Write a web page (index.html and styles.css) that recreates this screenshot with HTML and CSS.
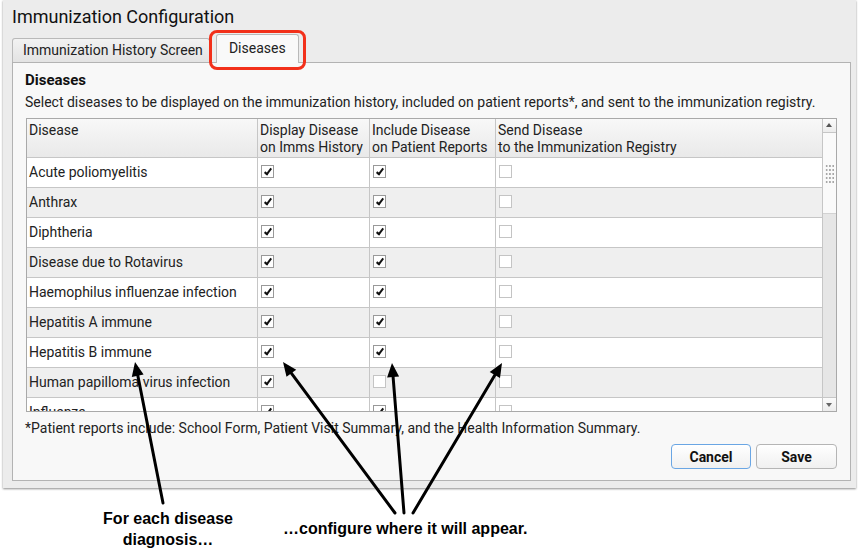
FILE: index.html
```html
<!DOCTYPE html>
<html lang="en">
<head>
  <meta charset="UTF-8">
  <title>Immunization Configuration</title>
  <link rel="stylesheet" href="styles.css">
</head>
<body>
  <!-- Dialog window -->
  <div class="window">
    <div class="title">Immunization Configuration</div>
    <div class="tabs">
      <div class="tab">Immunization History Screen</div>
      <div class="tab active">Diseases<span class="highlight"></span></div>
    </div>
    <div class="panel">
      <div class="heading">Diseases</div>
      <div class="desc">Select diseases to be displayed on the immunization history, included on patient reports*, and sent to the immunization registry.</div>

      <div class="grid">
        <div class="grid-main">
          <div class="grid-head">
            <div class="cell">Disease</div>
            <div class="cell">Display Disease<br>on Imms History</div>
            <div class="cell">Include Disease<br>on Patient Reports</div>
            <div class="cell">Send Disease<br>to the Immunization Registry</div>
          </div>
          <div class="grid-row">
            <div class="cell">Acute poliomyelitis</div>
            <div class="cell"><span class="cb on"></span></div>
            <div class="cell"><span class="cb on"></span></div>
            <div class="cell"><span class="cb"></span></div>
          </div>
          <div class="grid-row">
            <div class="cell">Anthrax</div>
            <div class="cell"><span class="cb on"></span></div>
            <div class="cell"><span class="cb on"></span></div>
            <div class="cell"><span class="cb"></span></div>
          </div>
          <div class="grid-row">
            <div class="cell">Diphtheria</div>
            <div class="cell"><span class="cb on"></span></div>
            <div class="cell"><span class="cb on"></span></div>
            <div class="cell"><span class="cb"></span></div>
          </div>
          <div class="grid-row">
            <div class="cell">Disease due to Rotavirus</div>
            <div class="cell"><span class="cb on"></span></div>
            <div class="cell"><span class="cb on"></span></div>
            <div class="cell"><span class="cb"></span></div>
          </div>
          <div class="grid-row">
            <div class="cell">Haemophilus influenzae infection</div>
            <div class="cell"><span class="cb on"></span></div>
            <div class="cell"><span class="cb on"></span></div>
            <div class="cell"><span class="cb"></span></div>
          </div>
          <div class="grid-row">
            <div class="cell">Hepatitis A immune</div>
            <div class="cell"><span class="cb on"></span></div>
            <div class="cell"><span class="cb on"></span></div>
            <div class="cell"><span class="cb"></span></div>
          </div>
          <div class="grid-row">
            <div class="cell">Hepatitis B immune</div>
            <div class="cell"><span class="cb on"></span></div>
            <div class="cell"><span class="cb on"></span></div>
            <div class="cell"><span class="cb"></span></div>
          </div>
          <div class="grid-row">
            <div class="cell">Human papilloma virus infection</div>
            <div class="cell"><span class="cb on"></span></div>
            <div class="cell"><span class="cb"></span></div>
            <div class="cell"><span class="cb"></span></div>
          </div>
          <div class="grid-row">
            <div class="cell">Influenza</div>
            <div class="cell"><span class="cb on"></span></div>
            <div class="cell"><span class="cb on"></span></div>
            <div class="cell"><span class="cb"></span></div>
          </div>
        </div>
        <!-- vertical scrollbar -->
        <div class="scroll">
          <div class="scroll-btn up"></div>
          <div class="scroll-thumb"><span class="grip"></span></div>
          <div class="scroll-track"></div>
          <div class="scroll-btn down"></div>
        </div>
      </div>

      <div class="footnote">*Patient reports include: School Form, Patient Visit Summary, and the Health Information Summary.</div>
      <div class="buttons">
        <button class="btn focus">Cancel</button>
        <button class="btn">Save</button>
      </div>
    </div>
  </div>

  <!-- Annotations -->
  <div class="notes">
    <div class="note-left">For each disease<br>diagnosis…</div>
    <div class="note-right">…configure where it will appear.</div>
  </div>

  <svg class="arrows" width="862" height="553" viewBox="0 0 862 553">
    <g stroke="#000" stroke-width="3" stroke-linecap="round">
      <line x1="163" y1="503" x2="137.7" y2="375"/>
      <line x1="395" y1="513" x2="291.3" y2="373.2"/>
      <line x1="404" y1="513" x2="393.1" y2="377"/>
      <line x1="413" y1="513" x2="494.9" y2="375"/>
    </g>
    <g fill="#000">
      <polygon points="135,362 143.6,374.6 131.8,376.9"/>
      <polygon points="283,362 296.2,369.7 286.5,376.8"/>
      <polygon points="392,363 399.1,376.5 387.1,377.5"/>
      <polygon points="502,363 500,378.1 489.7,372"/>
    </g>
  </svg>
</body>
</html>
```

FILE: styles.css
```css
/* Global */
body {
  margin: 0;
  background-color: #fff;
  color: #222;
  font-family: Roboto, "Liberation Sans", Arial, sans-serif;
  font-size: 14px;
  position: relative;
  width: 862px;
  height: 553px;
  overflow: hidden;
}

/* Dialog window */
.window {
  margin-left: 3px;
  width: 853px;
  height: 488px;
  box-sizing: border-box;
  padding: 0 5px 0 9px;
  background-color: #ececec;
  box-shadow: 0 1px 2px rgba(0, 0, 0, 0.45);
}
.title {
  font-size: 18px;
  line-height: 22px;
  padding: 6px 0 6px 0;
  color: #111;
}

/* Tabs */
.tabs {
  display: flex;
  align-items: flex-end;
  height: 28px;
}
.tab {
  height: 24px;
  line-height: 23px;
  box-sizing: border-box;
  padding: 0 6px 0 10px;
  margin-right: 6px;
  border: 1px solid #b9b9b9;
  border-bottom: none;
  border-radius: 3px 3px 0 0;
  background: linear-gradient(#f2f2f2, #e3e3e3);
  color: #222;
}
.tab.active {
  position: relative;
  height: 29px;
  line-height: 27px;
  width: 83px;
  padding: 0;
  text-align: center;
  background: #f9f9f9;
  margin-bottom: -1px;
  z-index: 1;
}
.highlight {
  position: absolute;
  left: -8px;
  right: -8px;
  top: -5px;
  bottom: -7px;
  border: 3px solid #f2301a;
  border-radius: 8px;
}

/* Tab panel */
.panel {
  height: 419px;
  box-sizing: border-box;
  padding: 8px 13px 0 12px;
  border: 1px solid #b3b3b3;
  background-color: #f8f8f8;
}
.heading {
  font-size: 15px;
  font-weight: bold;
  line-height: 19px;
  color: #111;
}
.desc {
  margin-top: 3px;
  line-height: 18px;
}

/* Disease grid */
.grid {
  display: flex;
  margin-top: 7px;
  margin-left: 1px;
  height: 294px;
  box-sizing: border-box;
  border: 1px solid #a9a9a9;
  background-color: #fff;
}
.grid-main {
  flex: 1;
  display: flex;
  flex-direction: column;
  overflow: hidden;
}
.grid-head,
.grid-row {
  display: grid;
  grid-template-columns: 231px 112px 126px 1fr;
  flex-shrink: 0;
  box-sizing: border-box;
  border-bottom: 1px solid #c6c6c6;
}
.grid-head {
  height: 39px;
  background: linear-gradient(#f8f8f8, #e9e9e9);
}
.grid-head .cell {
  padding: 3px 0 0 2px;
  line-height: 17px;
}
.grid-row {
  height: 30px;
}
.grid-row:nth-child(odd) {
  background-color: #efefef;
}
.cell {
  box-sizing: border-box;
  border-right: 1px solid #c6c6c6;
  padding: 0 0 2px 2px;
  display: flex;
  align-items: center;
  white-space: nowrap;
}
.grid-head .cell {
  display: block;
}
.cell:last-child {
  border-right: none;
}

/* Checkboxes */
.cb {
  width: 13px;
  height: 13px;
  box-sizing: border-box;
  margin: 0 0 0 1px;
  border: 1px solid #c4c4c4;
  background-color: #fff;
  position: relative;
}
.cb.on {
  border-color: #999;
}
.cb.on::after {
  content: "";
  position: absolute;
  left: 4px;
  top: 1px;
  width: 2px;
  height: 6px;
  border-right: 2px solid #111;
  border-bottom: 2px solid #111;
  transform: rotate(38deg);
}

/* Scrollbar */
.scroll {
  width: 14px;
  box-sizing: border-box;
  border-left: 1px solid #c6c6c6;
  display: flex;
  flex-direction: column;
  background-color: #e6e6e6;
}
.scroll-btn {
  height: 14px;
  box-sizing: border-box;
  background: linear-gradient(#fbfbfb, #ececec);
  position: relative;
}
.scroll-btn.up {
  border-bottom: 1px solid #c6c6c6;
}
.scroll-btn.down {
  border-top: 1px solid #c6c6c6;
}
.scroll-btn::after {
  content: "";
  position: absolute;
  left: 3px;
  top: 4px;
  border-left: 3.5px solid transparent;
  border-right: 3.5px solid transparent;
}
.scroll-btn.up::after {
  border-bottom: 4px solid #555;
}
.scroll-btn.down::after {
  top: 5px;
  border-top: 4px solid #666;
}
.scroll-thumb {
  height: 80px;
  background-color: #fafafa;
  border-bottom: 1px solid #d2d2d2;
  display: flex;
  justify-content: center;
  align-items: center;
}
.grip {
  width: 10px;
  height: 19px;
  margin-left: 1px;
  background-image: radial-gradient(circle, #a8a8a8 0.8px, transparent 1.1px);
  background-size: 3.3px 4px;
}
.scroll-track {
  flex: 1;
}

/* Footer of panel */
.footnote {
  margin-top: 7px;
  line-height: 18px;
}
.buttons {
  display: flex;
  justify-content: flex-end;
  gap: 5px;
  margin-top: 7px;
}
.btn {
  height: 25px;
  width: 80px;
  border: 1px solid #b5b5b5;
  border-radius: 4px;
  background: linear-gradient(#ffffff, #f0f0f0);
  font-family: Roboto, "Liberation Sans", Arial, sans-serif;
  font-size: 14px;
  font-weight: bold;
  color: #111;
  padding: 0;
}
.btn + .btn {
  width: 81px;
}
.btn.focus {
  border-color: #6aa6e4;
}

/* Annotations */
.notes {
  display: flex;
  align-items: flex-start;
  margin-top: 20px;
  padding-left: 88px;
  font-family: "Liberation Sans", Arial, sans-serif;
  font-size: 16px;
  font-weight: bold;
  line-height: 21px;
  color: #000;
}
.note-left {
  width: 160px;
  text-align: center;
}
.note-right {
  margin-left: 35px;
  margin-top: 10px;
}
.arrows {
  position: absolute;
  left: 0;
  top: 0;
  pointer-events: none;
}
```
